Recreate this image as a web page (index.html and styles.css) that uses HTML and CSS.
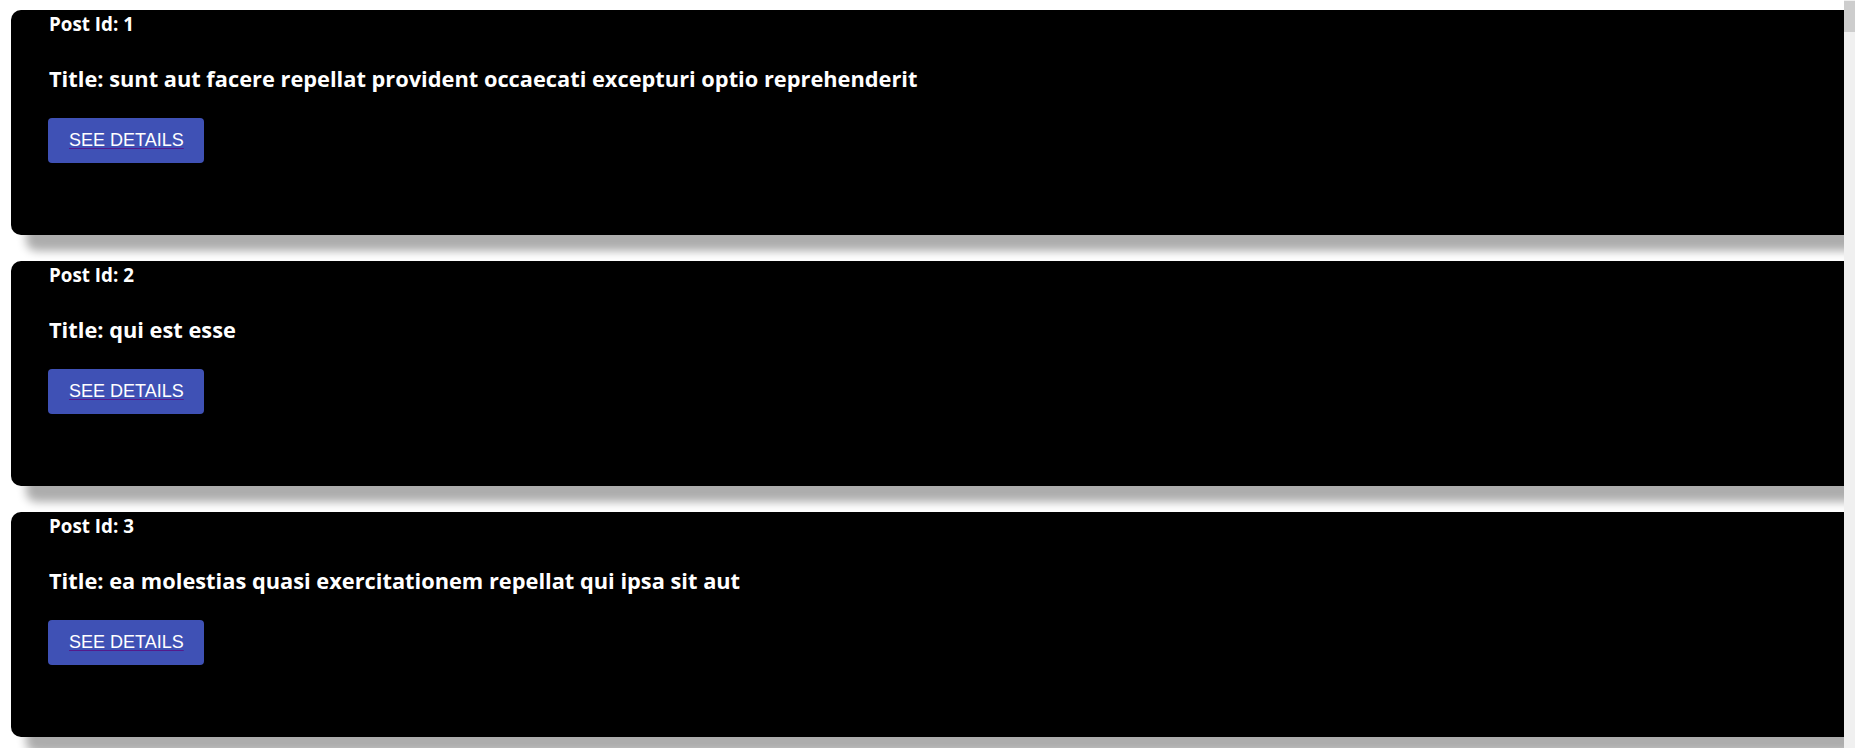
FILE: index.html
```html
<!DOCTYPE html>
<html lang="en">
<head>
<meta charset="utf-8">
<title>Posts</title>
<link rel="stylesheet" href="styles.css">
</head>
<body>
<main class="list">
  <article class="card">
    <h4 class="post-id">Post Id: 1</h4>
    <h3 class="post-title">Title: sunt aut facere repellat provident occaecati excepturi optio reprehenderit</h3>
    <a class="btn" href="#">SEE DETAILS</a>
  </article>
  <article class="card">
    <h4 class="post-id">Post Id: 2</h4>
    <h3 class="post-title">Title: qui est esse</h3>
    <a class="btn" href="#">SEE DETAILS</a>
  </article>
  <article class="card">
    <h4 class="post-id">Post Id: 3</h4>
    <h3 class="post-title">Title: ea molestias quasi exercitationem repellat qui ipsa sit aut</h3>
    <a class="btn" href="#">SEE DETAILS</a>
  </article>
</main>
<div class="scrollbar"><div class="thumb"></div></div>
</body>
</html>
```

FILE: styles.css
```css
html, body {
  margin: 0;
  padding: 0;
  height: 100%;
  overflow: hidden;
  background: #ffffff;
}

.list {
  display: flex;
  flex-direction: column;
  gap: 26px;
  padding: 10px 0 0 11px;
  font-family: "Open Sans", "Noto Sans", sans-serif;
}

.card {
  box-sizing: border-box;
  width: 1860px;
  height: 225px;
  flex: none;
  background: #000000;
  color: #ffffff;
  border-radius: 10px;
  box-shadow: 15px 16px 10px #adadad;
  padding: 3px 0 0 38px;
}

.post-id {
  margin: 0;
  font-size: 18.8px;
  line-height: 23px;
  font-weight: 700;
}

.post-title {
  margin: 30px 0 0;
  font-size: 21.8px;
  line-height: 26px;
  font-weight: 700;
}

.btn {
  display: inline-flex;
  align-items: center;
  box-sizing: border-box;
  height: 45px;
  margin: 26px 0 0 -1px;
  padding: 0 20px 0 21px;
  background: #3f51b5;
  border-radius: 4px;
  color: #ffffff;
  font-family: "Liberation Sans", Arial, sans-serif;
  font-size: 18px;
  text-decoration: underline;
  text-decoration-color: #551a8b;
  text-underline-offset: 2px;
}

.scrollbar {
  position: fixed;
  top: 0;
  right: 0;
  width: 11px;
  height: 100%;
  background: #f0f0f0;
}

.thumb {
  margin-top: 1px;
  height: 31px;
  background: #cdcdcd;
}
```
